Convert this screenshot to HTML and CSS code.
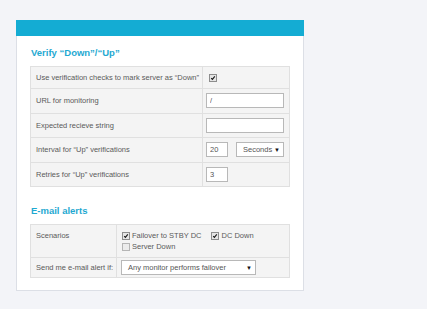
FILE: index.html
```html
<!DOCTYPE html>
<html lang="en">
<head>
    <meta charset="UTF-8">
    <title>Monitor settings</title>
    <link rel="stylesheet" href="styles.css">
</head>
<body>

    <div class="card">
        <div class="card-bar"></div>

        <div class="card-body">
            <!-- Verification -->
            <h2>Verify “Down”/“Up”</h2>
            <table class="form-table verify">
                <tr class="row-short">
                    <td class="label">Use verification checks to mark server as “Down”</td>
                    <td><span class="check on"><svg viewBox="0 0 8 8"><path d="M1.6 4.2 L3.2 5.9 L6.4 1.8"/></svg></span></td>
                </tr>
                <tr>
                    <td class="label">URL for monitoring</td>
                    <td><input class="field wide" type="text" value="/"></td>
                </tr>
                <tr>
                    <td class="label">Expected recieve string</td>
                    <td><input class="field wide" type="text" value=""></td>
                </tr>
                <tr>
                    <td class="label">Interval for “Up” verifications</td>
                    <td>
                        <div class="inline">
                            <input class="field small" type="text" value="20">
                            <div class="select seconds"><span>Seconds</span><span class="arrow">▼</span></div>
                        </div>
                    </td>
                </tr>
                <tr>
                    <td class="label">Retries for “Up” verifications</td>
                    <td><input class="field small" type="text" value="3"></td>
                </tr>
            </table>

            <!-- Alerts -->
            <h2 class="second">E-mail alerts</h2>
            <table class="form-table alerts">
                <tr>
                    <td class="label top">Scenarios</td>
                    <td class="options">
                        <div class="option-line">
                            <label class="option"><span class="check on"><svg viewBox="0 0 8 8"><path d="M1.6 4.2 L3.2 5.9 L6.4 1.8"/></svg></span>Failover to STBY DC</label>
                            <label class="option"><span class="check on"><svg viewBox="0 0 8 8"><path d="M1.6 4.2 L3.2 5.9 L6.4 1.8"/></svg></span>DC Down</label>
                        </div>
                        <div class="option-line">
                            <label class="option"><span class="check"></span>Server Down</label>
                        </div>
                    </td>
                </tr>
                <tr class="row-select">
                    <td class="label">Send me e-mail alert if:</td>
                    <td><div class="select alert-if"><span>Any monitor performs failover</span><span class="arrow">▼</span></div></td>
                </tr>
            </table>
        </div>
    </div>

</body>
</html>
```

FILE: styles.css
```css
body {
    margin: 0;
    padding: 20px 16px;
    background: #f3f4f8;
    font-family: "Liberation Sans", Arial, sans-serif;
    color: #5a5a5a;
}

.card {
    width: 288px;
    box-sizing: border-box;
    background: #fff;
    border: 1px solid #dcdfe6;
    border-top: none;
}

.card-bar {
    height: 16px;
    margin: 0 -1px;
    background: #14acd3;
}

.card-body {
    padding: 11px 13px 12px;
}

h2 {
    margin: 0 0 7px 1px;
    font-size: 9.5px;
    line-height: 12px;
    font-weight: bold;
    color: #1fa9d1;
}

h2.second {
    margin-top: 18px;
}

.form-table {
    width: 100%;
    border-collapse: collapse;
    background: #f4f4f4;
    border: 1px solid #d6d6d6;
    font-size: 7.5px;
}

.form-table td {
    border: 1px solid #e0e0e0;
    padding: 0 3px;
    height: 23.5px;
    vertical-align: middle;
}

.form-table td.label {
    padding: 0 2px 0 5px;
    white-space: nowrap;
}

.verify td.label {
    width: 164px;
}

.verify .row-short td {
    height: 21px;
}

.alerts td.label {
    width: 78px;
}

.alerts td.top {
    vertical-align: top;
    padding-top: 6px;
}

.alerts td.options {
    padding: 5px 5px;
    height: auto;
}

.alerts .row-select td {
    height: 19px;
}

.field {
    display: block;
    box-sizing: border-box;
    height: 15px;
    padding: 0 3px;
    border: 1px solid #b8b8b8;
    background: #fff;
    font-family: inherit;
    font-size: 7.5px;
    color: #555;
    outline: none;
}

.field.wide {
    width: 78px;
}

.field.small {
    width: 22px;
}

.inline {
    display: flex;
    gap: 8px;
}

.select {
    display: flex;
    align-items: center;
    justify-content: space-between;
    box-sizing: border-box;
    height: 15px;
    padding: 0 3px 0 6px;
    border: 1px solid #b8b8b8;
    background: #fff;
    color: #555;
}

.select.seconds {
    width: 48px;
}

.select.alert-if {
    width: 135px;
    margin-left: 1px;
}

.select .arrow {
    font-size: 6px;
    color: #111;
}

.check {
    display: inline-block;
    box-sizing: border-box;
    width: 8px;
    height: 8px;
    border: 1px solid #8d8d8d;
    background: #e6e6e6;
    vertical-align: middle;
}

.check svg {
    display: block;
    width: 6px;
    height: 6px;
}

.check svg path {
    fill: none;
    stroke: #1a1a1a;
    stroke-width: 1.5;
}

.check:not(.on) {
    border-color: #b5b5b5;
    background: #ececec;
}

.verify .check {
    margin-left: 3px;
}

.option-line {
    display: flex;
    gap: 10px;
    line-height: 11px;
}

.option {
    display: flex;
    align-items: center;
    gap: 2px;
}
```
